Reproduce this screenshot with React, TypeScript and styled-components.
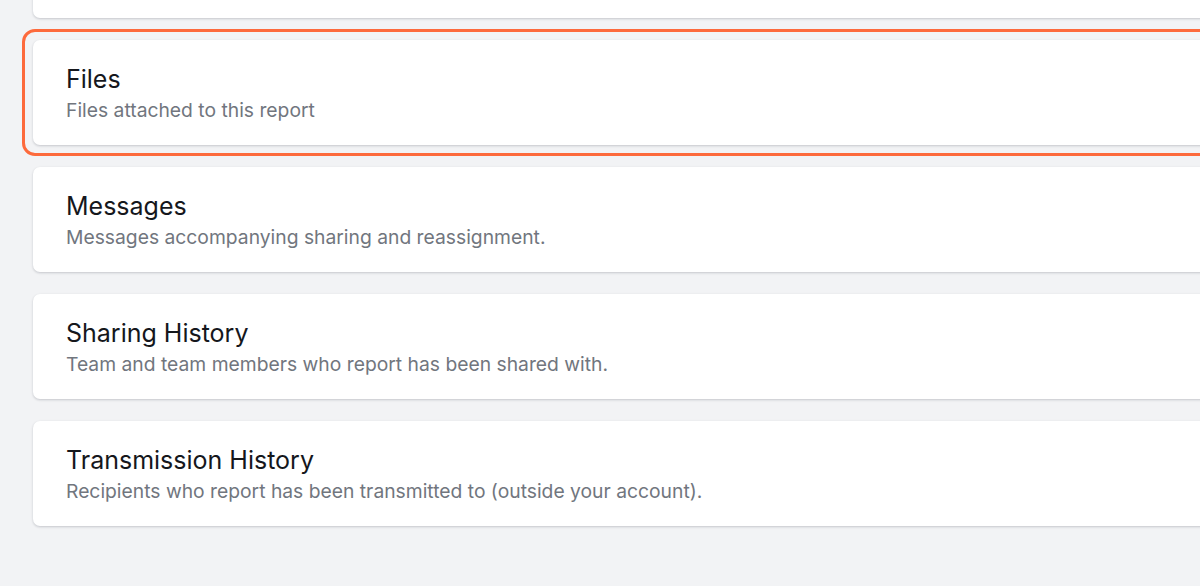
import React from 'react'
import styled, { createGlobalStyle } from 'styled-components'

const GlobalStyle = createGlobalStyle`
  html, body {
    margin: 0;
    padding: 0;
    background: #f2f3f5;
    overflow: hidden;
  }
  body {
    font-family: Inter, "Noto Sans", Arial, sans-serif;
    -webkit-font-smoothing: antialiased;
  }
`

type Section = {
  id: string
  title?: string
  subtitle?: string
  highlighted?: boolean
}

// first card is scrolled up out of view, only its bottom edge shows
const sections: Section[] = [
  { id: 'details' },
  { id: 'files', title: 'Files', subtitle: 'Files attached to this report', highlighted: true },
  { id: 'messages', title: 'Messages', subtitle: 'Messages accompanying sharing and reassignment.' },
  { id: 'sharing', title: 'Sharing History', subtitle: 'Team and team members who report has been shared with.' },
  {
    id: 'transmission',
    title: 'Transmission History',
    subtitle: 'Recipients who report has been transmitted to (outside your account).',
  },
]

const App: React.FC = () => {
  return (
    <>
      <GlobalStyle />
      <Page>
        <List>
          {sections.map(section => (
            <Card key={section.id} $highlighted={section.highlighted}>
              {section.title && <Title>{section.title}</Title>}
              {section.subtitle && <Subtitle>{section.subtitle}</Subtitle>}
            </Card>
          ))}
        </List>
      </Page>
    </>
  )
}

const Page = styled.div`
  width: 1200px;
  height: 586px;
  overflow: hidden;
`

const List = styled.div`
  display: flex;
  flex-direction: column;
  gap: 22px;
  margin-top: -87px;
  padding-left: 33px;
  width: 1220px;
`

const Card = styled.div<{ $highlighted?: boolean }>`
  position: relative;
  box-sizing: border-box;
  height: 105px;
  padding: 24px 33px 0;
  background: #ffffff;
  border-radius: 7px;
  box-shadow: 0 1px 3px rgba(15, 23, 42, 0.14), 0 1px 2px rgba(15, 23, 42, 0.06);

  ${({ $highlighted }) =>
    $highlighted &&
    `
    &::before {
      content: '';
      position: absolute;
      inset: -11px;
      border: 3px solid #fd6a3c;
      border-radius: 13px;
      pointer-events: none;
    }
  `}
`

const Title = styled.div`
  font-size: 25px;
  line-height: 30px;
  font-weight: 400;
  color: #15171c;
`

const Subtitle = styled.div`
  margin-top: 4px;
  font-size: 19.3px;
  line-height: 24px;
  color: #71767e;
`

export default App
